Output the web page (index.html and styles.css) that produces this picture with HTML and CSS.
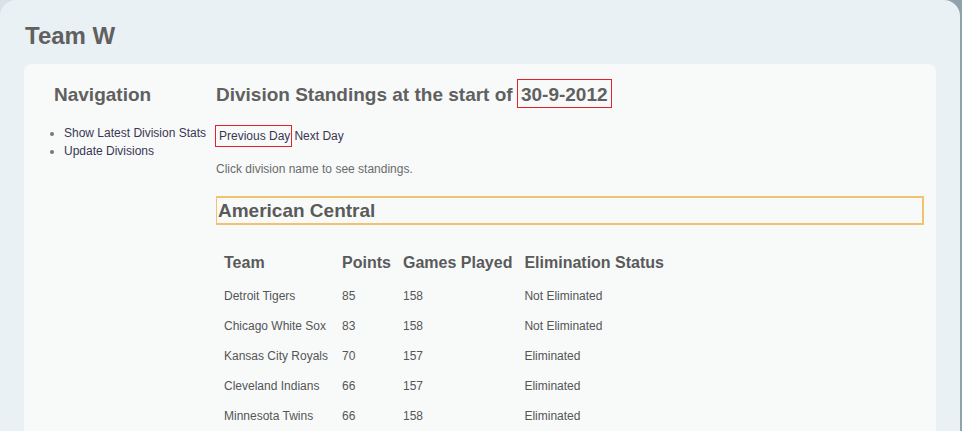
FILE: index.html
```html
<!DOCTYPE html>
<html>
<head>
<meta charset="utf-8">
<title>Team W</title>
<link rel="stylesheet" href="styles.css">
</head>
<body>
<div class="page">
  <h1 class="site-title">Team W</h1>
  <div class="panel">
    <aside class="nav">
      <h2 class="nav-title">Navigation</h2>
      <ul class="nav-list">
        <li><a href="#">Show Latest Division Stats</a></li>
        <li><a href="#">Update Divisions</a></li>
      </ul>
    </aside>
    <main class="main">
      <h2 class="main-title">Division Standings at the start of <span class="date">30-9-2012</span></h2>
      <p class="day-links"><a href="#" class="prev">Previous Day</a><a href="#" class="next">Next Day</a></p>
      <p class="hint">Click division name to see standings.</p>
      <h3 class="division">American Central</h3>
      <table class="standings">
        <thead>
          <tr><th class="c1">Team</th><th class="c2">Points</th><th class="c3">Games Played</th><th>Elimination Status</th></tr>
        </thead>
        <tbody>
          <tr><td>Detroit Tigers</td><td>85</td><td>158</td><td>Not Eliminated</td></tr>
          <tr><td>Chicago White Sox</td><td>83</td><td>158</td><td>Not Eliminated</td></tr>
          <tr><td>Kansas City Royals</td><td>70</td><td>157</td><td>Eliminated</td></tr>
          <tr><td>Cleveland Indians</td><td>66</td><td>157</td><td>Eliminated</td></tr>
          <tr><td>Minnesota Twins</td><td>66</td><td>158</td><td>Eliminated</td></tr>
        </tbody>
      </table>
    </main>
  </div>
</div>
</body>
</html>
```

FILE: styles.css
```css
html, body {
  margin: 0;
  padding: 0;
}
body {
  background: linear-gradient(to right, #d9e3e7 0%, #b9c7cd 70%, #8fa3ad 99%);
  font-family: "Liberation Sans", Arial, sans-serif;
  color: #666;
  height: 431px;
  overflow: hidden;
}
.page {
  width: 960px;
  box-sizing: border-box;
  height: 431px;
  background: #e9f1f4;
  border-radius: 16px 16px 0 0;
  padding: 0 24px;
  overflow: hidden;
}
.site-title {
  margin: 0;
  padding: 22px 0 0 1px;
  font-size: 24px;
  line-height: 28px;
  font-weight: bold;
  color: #606060;
}
.panel {
  margin-top: 14px;
  background: #f8fafa;
  border-radius: 8px 8px 0 0;
  padding: 20px 12px 0 0;
  display: flex;
  height: 367px;
  box-sizing: border-box;
}
.nav {
  width: 192px;
  flex: none;
  box-sizing: border-box;
  padding-left: 30px;
}
.nav-title, .main-title {
  margin: 0;
  font-size: 19px;
  line-height: 22px;
  font-weight: bold;
  color: #606060;
}
.nav-list {
  margin: 18px 0 0 0;
  padding-left: 10px;
  font-size: 12px;
  line-height: 18px;
  color: #777;
}
a {
  color: #3a3652;
  text-decoration: none;
}
.main {
  flex: 1;
  min-width: 0;
}
.main-title .date {
  border: 1px solid #e3202c;
  padding: 4px 3px 2px 3px;
  margin-left: -1px;
}
.day-links {
  margin: 21px 0 0 0;
  font-size: 12px;
  line-height: 18px;
}
.prev {
  border: 1px solid #e3202c;
  padding: 3px 1px 3px 3px;
  margin-left: -1px;
}
.next {
  margin-left: 2px;
}
.hint {
  margin: 15px 0 0 0;
  font-size: 12px;
  line-height: 18px;
  color: #6a6a6a;
}
.division {
  margin: 18px 0 0 0;
  border-style: solid;
  border-color: #f0c46f;
  border-width: 2px 2px 2px 1px;
  padding: 3px 0 2px 1px;
  font-size: 19px;
  line-height: 20px;
  font-weight: bold;
  color: #5a5a5a;
}
.standings {
  margin: 26px 0 0 2px;
  border-collapse: collapse;
  color: #555;
}
.standings th {
  text-align: left;
  white-space: nowrap;
  font-size: 16px;
  line-height: 18px;
  font-weight: bold;
  padding: 3px 6px 9px 6px;
  color: #5a5a5a;
}
.standings th.c1 { width: 106px; }
.standings th.c2 { width: 49px; }
.standings th.c3 { width: 109px; }
.standings td {
  white-space: nowrap;
  font-size: 12px;
  line-height: 14px;
  padding: 8px 6px;
}
```
